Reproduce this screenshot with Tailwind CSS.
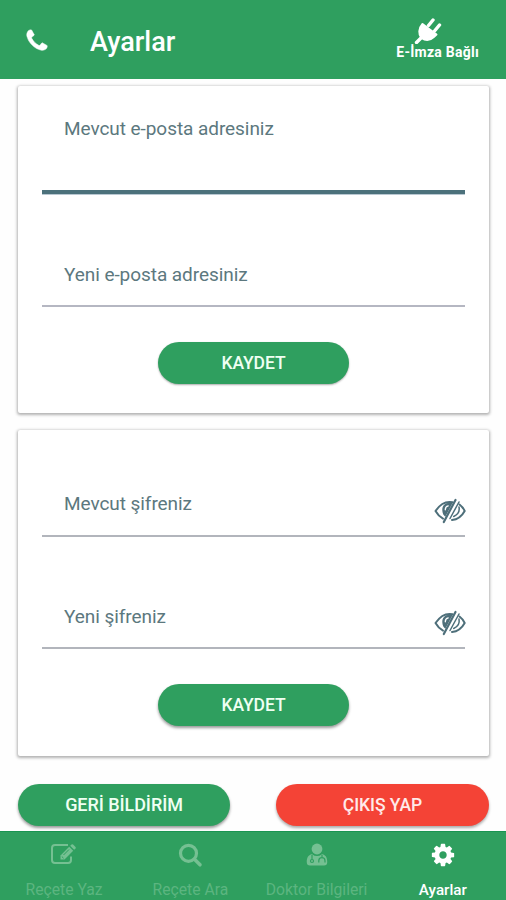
<!DOCTYPE html>
<html lang="tr">
<head>
<meta charset="utf-8">
<title>Ayarlar</title>
<script src="https://cdn.jsdelivr.net/npm/@tailwindcss/browser@4"></script>
</head>
<body class="w-[506px] h-[900px] overflow-hidden bg-[#fefefe] font-[Roboto,sans-serif] text-[#5c787e]">
<svg class="hidden">
  <symbol id="eye" viewBox="0 0 32 26">
    <g fill="none" stroke="currentColor" stroke-linecap="round" stroke-linejoin="round">
      <path stroke-width="2" d="M18.500 4.200C10 2.800 5.500 7.500 1.500 13c2 3.500 4.500 6 7.500 7.600M25.500 6.500c2.300 1.700 4 4 5.200 6.500-3 5.500-7 8.500-12.700 9"/>
      <path stroke-width="2.200" d="M21.500 2 9.800 24"/>
      <path stroke-width="1.500" d="M25 9c.8 4-.8 7.500-5.300 9.500M25 4 16 20.500"/>
    </g>
    <path fill="currentColor" d="M18.500 5.200C12 3.500 8 7.500 8.300 12.300c.1 3 1.200 5.200 3 6.500Z"/>
    <path fill="none" stroke="#fff" stroke-width="1.300" stroke-linecap="round" d="M11.300 11.800c0-2 1.200-3.500 2.900-3.900"/>
  </symbol>
</svg>
<div class="flex flex-col h-full">
  <header class="h-[79px] shrink-0 bg-[#2f9f5f] flex items-center pl-[24px] pr-[27px] text-white">
    <svg class="w-[26px] h-[26px] mt-[2px]" viewBox="0 0 1792 1792" fill="currentColor" stroke="currentColor" stroke-width="40"><path d="M1600 1240q0 27-10 70.500t-21 68.500q-21 50-122 106-94 51-186 51-27 0-53-3.500t-57.500-12.500-47-14.500-55.500-20.500-49-18q-98-35-175-83-127-79-264-216t-216-264q-48-77-83-175-3-9-18-49t-20.500-55.500-14.500-47-12.500-57.500-3.500-53q0-92 51-186 56-101 106-122 25-11 68.500-21t70.500-10q14 0 21 3 18 6 53 76 11 19 30 54t35 63.500 31 53.500q3 4 17.500 25t21.500 35.500 7 28.500q0 20-28.500 50t-62 55-62 53-28.500 46q0 9 5 22.500t8.500 20.500 14 24 11.500 19q76 137 174 235t235 174q2 1 19 11.500t24 14 20.500 8.500 22.500 5q18 0 46-28.500t53-62 55-62 50-28.500q14 0 28.500 7t35.500 21.500 25 17.500q25 15 53.500 31t63.500 35 54 30q70 35 76 53 3 7 3 21z"/></svg>
    <h1 class="ml-[40px] mt-[5px] text-[27px] leading-8 font-medium">Ayarlar</h1>
    <div class="ml-auto -mt-[4px] flex flex-col items-center">
      <svg class="w-[28px] h-[28px] -ml-[20px]" viewBox="0 0 28 28" fill="none" stroke="#fff" stroke-linecap="round">
        <path stroke-width="3.400" d="m14.500 9.500 4.500-5.500M20.500 15l5-6M2.500 26.500l6-6"/>
        <path fill="#fff" stroke="#fff" stroke-width="2" stroke-linejoin="round" d="m8.500 8 14 10.500-2.700 2.500c-3.800 3.600-8.600 3.600-12.300 1-3.200-3.700-3-9.500 1-14Z"/>
      </svg>
      <span class="text-[14px] leading-[16px] font-bold whitespace-nowrap tracking-[0.25px]">E-İmza Bağlı</span>
    </div>
  </header>
  <main class="flex-1 pl-[18px] pr-[17px] pt-[7px] text-[19px] leading-6 tracking-[-0.06px]">
    <section class="h-[327px] bg-white rounded-[2px] shadow-[0_1px_3px_1px_#0000004d] px-6 flex flex-col">
      <label class="h-[108px] pt-[31px] pl-[22px] border-b-[4px] border-[#4c717b] shadow-[0_1px_0_#b9c8d2]"><span>Mevcut e-posta adresiniz</span></label>
      <label class="h-[113px] pt-[69px] pl-[22px] border-b-[2px] border-[#b5b7c2]"><span>Yeni e-posta adresiniz</span></label>
      <button class="mt-[35px] self-center w-[191px] h-[42px] rounded-full bg-[#2f9f5f] text-[#effff3] text-[17.500px] font-medium shadow-[0_1px_2px_#00000055]">KAYDET</button>
    </section>
    <section class="mt-[17px] h-[326px] bg-white rounded-[2px] shadow-[0_1px_3px_1px_#0000004d] px-6 flex flex-col">
      <div class="h-[107px] pt-[62px] pl-[22px] border-b-[2px] border-[#b2b5bc] flex justify-between"><span>Mevcut şifreniz</span><svg class="w-8 h-[26px] mt-[6px] -mr-px text-[#4e6f7a]"><use href="#eye"/></svg></div>
      <div class="h-[112px] pt-[68px] pl-[22px] border-b-[2px] border-[#b2b5bc] flex justify-between"><span>Yeni şifreniz</span><svg class="w-8 h-[26px] mt-[5px] -mr-px text-[#4e6f7a]"><use href="#eye"/></svg></div>
      <button class="mt-[35px] self-center w-[191px] h-[42px] rounded-full bg-[#2f9f5f] text-[#effff3] text-[17.500px] font-medium shadow-[0_2px_3px_#00000066]">KAYDET</button>
    </section>
    <div class="mt-[28px] flex justify-between text-[18px] font-medium">
      <button class="w-[212px] h-[42px] rounded-full bg-[#2f9f5f] text-[#effff3] shadow-[0_2px_3px_#00000066]">GERİ BİLDİRİM</button>
      <button class="w-[213px] h-[42px] rounded-full bg-[#f44336] text-[#ffeaea] shadow-[0_2px_3px_#00000055] text-[17.500px]">ÇIKIŞ YAP</button>
    </div>
  </main>
  <nav class="h-[69px] shrink-0 bg-[#2f9f5f] border-t border-[#199451] pl-px grid grid-cols-4 text-[15.700px] leading-5 text-[#5cb580] whitespace-nowrap">
    <div class="flex flex-col items-center pt-[10px]">
      <svg class="w-[26px] h-[26px]" viewBox="0 0 26 26" fill="none" stroke="#75c092"><path stroke-width="2" d="M17 3H4Q1 3 1 6v12q0 3 3 3h13q3 0 3-3v-3.500"/><path fill="#75c092" stroke="none" d="m9.500 13.500 8.700-8.700 4 4-8.700 8.700h-4Z"/><path fill="#75c092" stroke="none" d="m19.200 3.800 1.300-1.300q.8-.7 1.600 0l2.400 2.400q.7.800 0 1.600l-1.300 1.300Z"/><path stroke="#2f9f5f" stroke-width="1" d="m12.500 13 5.500-5.500M10.800 14.500l1.700 1.700"/></svg>
      <span class="mt-[12px]">Reçete Yaz</span>
    </div>
    <div class="flex flex-col items-center pt-[10px]">
      <svg class="w-[26px] h-[26px]" viewBox="0 0 26 26" fill="none" stroke="#75c092" stroke-width="3.200" stroke-linecap="round"><circle cx="11.500" cy="11.300" r="8"/><path stroke-width="3.500" d="m17.500 17.300 5.500 5.500"/></svg>
      <span class="mt-[12px]">Reçete Ara</span>
    </div>
    <div class="flex flex-col items-center pt-[10px]">
      <svg class="w-[26px] h-[26px]" viewBox="0 0 26 26" fill="#75c092"><circle cx="13" cy="7" r="5.400"/><path d="M8 12.200q5 3.700 10 0c4 .5 5.500 4.300 5.200 8.300q0 3-3.200 3H6q-3.200 0-3.200-3c-.3-4 1.200-7.800 5.200-8.300Z"/><g fill="none" stroke="#2f9f5f" stroke-width="1.200"><path d="M8 13v4.500M18 13v2.500M14.800 20.500v-1.800q0-3 3.100-3t3.100 3v1.800"/><circle cx="8" cy="19" r="1.500"/></g></svg>
      <span class="mt-[12px]">Doktor Bilgileri</span>
    </div>
    <div class="flex flex-col items-center pt-[10px] text-white">
      <svg class="w-[26px] h-[26px]" viewBox="0 0 1792 1792" fill="currentColor"><path d="M1152 896q0-106-75-181t-181-75-181 75-75 181 75 181 181 75 181-75 75-181zm512-109v222q0 12-8 23t-20 13l-185 28q-19 54-39 91 35 50 107 138 10 12 10 25t-9 23q-27 37-99 108t-94 71q-12 0-26-9l-138-108q-44 23-91 38-16 136-29 186-7 28-36 28h-222q-14 0-24.500-8.500t-11.500-21.500l-28-184q-49-16-90-37l-141 107q-10 9-25 9-14 0-25-11-126-114-165-168-7-10-7-23 0-12 8-23 15-21 51-66.500t54-70.500q-27-50-41-99l-183-27q-13-2-21-12.500t-8-23.500v-222q0-12 8-23t19-13l186-28q14-46 39-92-40-57-107-138-10-12-10-24 0-10 9-23 26-36 98.500-107.500t94.500-71.500q13 0 26 10l138 107q44-23 91-38 16-136 29-186 7-28 36-28h222q14 0 24.500 8.500t11.500 21.500l28 184q49 16 90 37l142-107q9-9 24-9 13 0 25 10 129 119 165 170 7 8 7 22 0 12-8 23-15 21-51 66.500t-54 70.500q26 50 41 98l183 28q13 2 21 12.500t8 23.500z"/></svg>
      <span class="mt-[12px] font-medium text-[15.200px]">Ayarlar</span>
    </div>
  </nav>
</div>
</body>
</html>
